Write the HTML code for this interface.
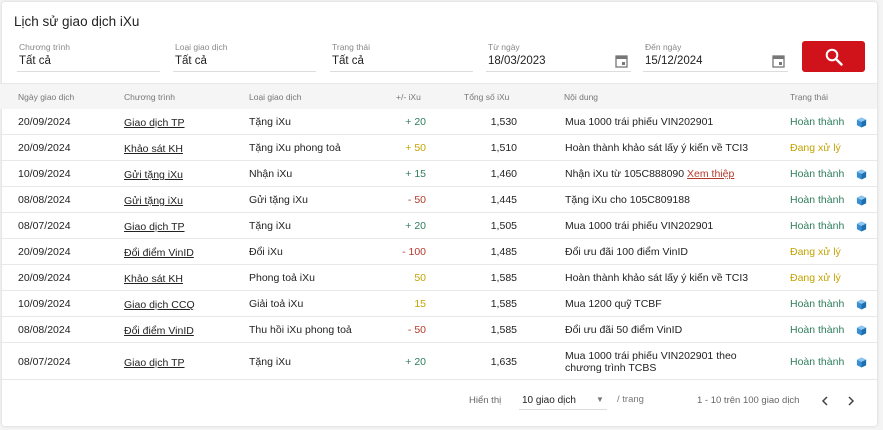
<!DOCTYPE html>
<html><head><meta charset="utf-8"><style>
*{box-sizing:border-box;margin:0;padding:0}
body{width:883px;height:430px;background:#f4f4f4;font-family:"Liberation Sans",sans-serif;color:#222;position:relative;overflow:hidden}
.card{position:absolute;left:2px;top:2px;width:875px;height:424px;background:#fff;border-radius:3px;box-shadow:0 0 3px rgba(0,0,0,.15)}
.a{position:absolute;white-space:nowrap}
.title{left:14px;top:14px;font-size:13.5px;color:#222}
.lbl{font-size:8.5px;color:#888;top:42px}
.val{font-size:11.5px;color:#222;top:55px}
.line{position:absolute;top:71px;height:1px;background:#ddd}
.btn{position:absolute;left:802px;top:41px;width:63px;height:31px;background:#d0121b;border-radius:3px}
.hdr{position:absolute;left:0;top:83px;width:877px;height:26px;background:#f5f5f5;border-top:1px solid #e8e8e8}
.h{font-size:8.5px;color:#777;top:92px}
.row{position:absolute;left:0;width:877px;border-bottom:1px solid #e8e8e8}
.c{font-size:10.5px;color:#222}
.u{text-decoration:underline}
.r{text-align:right}
.g{color:#2e7d5b}.y{color:#c4a300}.rd{color:#b33a2a}
.cube{position:absolute;left:856px;width:11px;height:11px}
</style></head><body>
<div class="card"></div>
<div class="a title">Lịch sử giao dịch iXu</div>
<div class="a lbl" style="left:19px">Chương trình</div><div class="a val" style="left:19px">Tất cả</div><div class="line" style="left:17px;width:143px"></div>
<div class="a lbl" style="left:175px">Loại giao dịch</div><div class="a val" style="left:175px">Tất cả</div><div class="line" style="left:173px;width:143px"></div>
<div class="a lbl" style="left:332px">Trạng thái</div><div class="a val" style="left:332px">Tất cả</div><div class="line" style="left:330px;width:143px"></div>
<div class="a lbl" style="left:488px">Từ ngày</div><div class="a val" style="left:488px">18/03/2023</div><div class="line" style="left:486px;width:145px"></div>
<div class="a lbl" style="left:645px">Đến ngày</div><div class="a val" style="left:645px">15/12/2024</div><div class="line" style="left:643px;width:145px"></div>
<svg class="a" style="left:615px;top:54px" width="13" height="14" viewBox="0 0 13 14"><rect x="1" y="2" width="11" height="11" fill="none" stroke="#777" stroke-width="1.3"/><rect x="1" y="2" width="11" height="3" fill="#777"/><rect x="7" y="8" width="3" height="3" fill="#777"/></svg>
<svg class="a" style="left:772px;top:54px" width="13" height="14" viewBox="0 0 13 14"><rect x="1" y="2" width="11" height="11" fill="none" stroke="#777" stroke-width="1.3"/><rect x="1" y="2" width="11" height="3" fill="#777"/><rect x="7" y="8" width="3" height="3" fill="#777"/></svg>
<div class="btn"><svg style="position:absolute;left:23px;top:7px" width="18" height="18" viewBox="0 0 18 18"><circle cx="7" cy="7" r="5.3" fill="none" stroke="#fff" stroke-width="2"/><path d="M11 11 L16.5 16.5" stroke="#fff" stroke-width="2.4" stroke-linecap="round"/></svg></div>
<div class="hdr"></div>
<div class="a h" style="left:18px">Ngày giao dịch</div>
<div class="a h" style="left:124px">Chương trình</div>
<div class="a h" style="left:249px">Loại giao dịch</div>
<div class="a h" style="left:396px">+/- iXu</div>
<div class="a h" style="left:464px">Tổng số iXu</div>
<div class="a h" style="left:564px">Nội dung</div>
<div class="a h" style="left:790px">Trạng thái</div>
<div id="rows"></div>
<div class="a" style="left:469px;top:395px;font-size:9.5px;color:#666">Hiển thị</div>
<div class="a" style="left:522px;top:395px;font-size:10px;color:#222">10 giao dịch</div>
<div class="a" style="left:596px;top:395px;font-size:8px;color:#777">▼</div>
<div class="line" style="left:519px;top:409px;width:88px"></div>
<div class="a" style="left:617px;top:394px;font-size:9.5px;color:#777">/ trang</div>
<div class="a" style="left:697px;top:395px;font-size:9.5px;color:#666">1 - 10 trên 100 giao dịch</div>
<svg class="a" style="left:820px;top:396px" width="10" height="10"><path d="M7 1 L3 5 L7 9" fill="none" stroke="#444" stroke-width="1.5"/></svg>
<svg class="a" style="left:846px;top:396px" width="10" height="10"><path d="M3 1 L7 5 L3 9" fill="none" stroke="#444" stroke-width="1.5"/></svg>
<script>
(function(){
var d=[
["20/09/2024","Giao dịch TP","Tặng iXu","+ 20","g","1,530","Mua 1000 trái phiếu VIN202901","Hoàn thành",1],
["20/09/2024","Khảo sát KH","Tặng iXu phong toả","+ 50","y","1,510","Hoàn thành khảo sát lấy ý kiến về TCI3","Đang xử lý",0],
["10/09/2024","Gửi tặng iXu","Nhận iXu","+ 15","g","1,460","Nhận iXu từ 105C888090 <span class='u' style='color:#b33a2a'>Xem thiệp</span>","Hoàn thành",1],
["08/08/2024","Gửi tặng iXu","Gửi tặng iXu","- 50","rd","1,445","Tặng iXu cho 105C809188","Hoàn thành",1],
["08/07/2024","Giao dịch TP","Tặng iXu","+ 20","g","1,505","Mua 1000 trái phiếu VIN202901","Hoàn thành",1],
["20/09/2024","Đổi điểm VinID","Đổi iXu","- 100","rd","1,485","Đổi ưu đãi 100 điểm VinID","Đang xử lý",0],
["20/09/2024","Khảo sát KH","Phong toả iXu","50","y","1,585","Hoàn thành khảo sát lấy ý kiến về TCI3","Đang xử lý",0],
["10/09/2024","Giao dịch CCQ","Giải toả iXu","15","y","1,585","Mua 1200 quỹ TCBF","Hoàn thành",1],
["08/08/2024","Đổi điểm VinID","Thu hồi iXu phong toả","- 50","rd","1,585","Đổi ưu đãi 50 điểm VinID","Hoàn thành",1],
["08/07/2024","Giao dịch TP","Tặng iXu","+ 20","g","1,635","Mua 1000 trái phiếu VIN202901 theo<br>chương trình TCBS","Hoàn thành",1]];
var h='',yy=109;
d.forEach(function(r,i){var ht=i==9?37:26;var cy=yy+ht/2-6;
h+='<div class="row" style="top:'+yy+'px;height:'+ht+'px"></div>'+
'<div class="a c" style="left:18px;top:'+cy+'px">'+r[0]+'</div>'+
'<div class="a c u" style="left:124px;top:'+(cy+1)+'px">'+r[1]+'</div>'+
'<div class="a c" style="left:249px;top:'+cy+'px">'+r[2]+'</div>'+
'<div class="a c r '+r[4]+'" style="left:365px;width:61px;top:'+cy+'px">'+r[3]+'</div>'+
'<div class="a c r" style="left:455px;width:62px;top:'+cy+'px">'+r[5]+'</div>'+
'<div class="a c" style="left:565px;top:'+(i==9?cy-6:cy)+'px;line-height:12px">'+r[6]+'</div>'+
'<div class="a c '+(r[7]=='Hoàn thành'?'g':'y')+'" style="left:790px;top:'+cy+'px">'+r[7]+'</div>';
if(r[8])h+='<svg class="cube" style="top:'+(cy+1)+'px" viewBox="0 0 12 12"><path d="M6 0.5L11 3V9L6 11.5L1 9V3Z" fill="#3a8fd0"/><path d="M6 0.5L11 3L6 5.5L1 3Z" fill="#8cc6ef"/><path d="M6 5.5V11.5L11 9V3Z" fill="#1f6fb0"/></svg>';
yy+=ht;});
document.getElementById('rows').innerHTML=h;
})();
</script>
</body></html>
